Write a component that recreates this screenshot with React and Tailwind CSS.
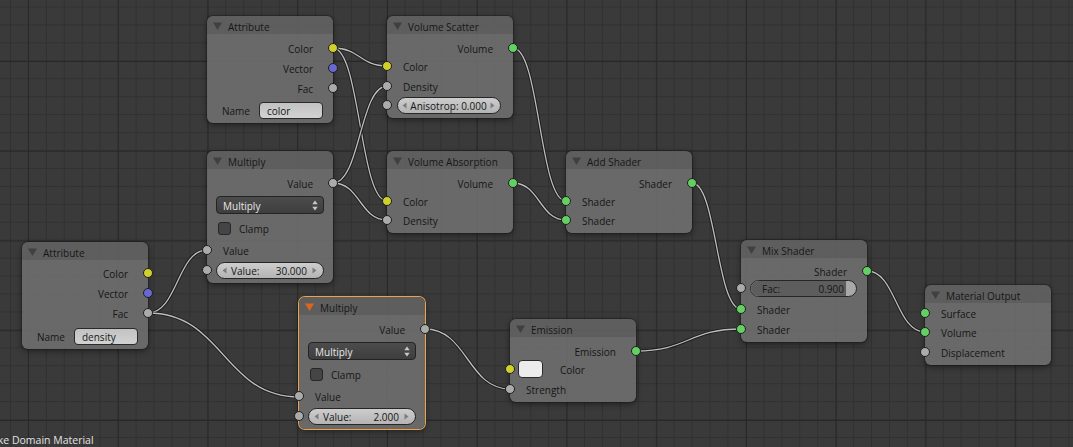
const SOCK = {
  y: "bg-[#d0d02c]",
  b: "bg-[#6868d4]",
  g: "bg-[#ababab]",
  s: "bg-[#62d062]",
};

const nodes = [
  {
    x: 207, y: 16, title: "Attribute",
    rows: [
      { k: "out", label: "Color", c: "y" },
      { k: "out", label: "Vector", c: "b" },
      { k: "out", label: "Fac", c: "g" },
      { k: "name", v: "color", mt: "mt-[2px]" },
    ],
  },
  {
    x: 387, y: 16, title: "Volume Scatter",
    rows: [
      { k: "out", label: "Volume", c: "s" },
      { k: "in", label: "Color", c: "y", mt: "-mt-[2px]" },
      { k: "in", label: "Density", c: "g" },
      { k: "aniso", text: "Anisotrop: 0.000", mt: "-mt-[1px]" },
    ],
  },
  {
    x: 207, y: 151, title: "Multiply",
    rows: [
      { k: "out", label: "Value", c: "g" },
      { k: "menu", v: "Multiply", mt: "mt-[3px]" },
      { k: "check", label: "Clamp", mt: "mt-[4px]" },
      { k: "in", label: "Value", c: "g", mt: "mt-[2px]" },
      { k: "num", label: "Value:", v: "30.000" },
    ],
  },
  {
    x: 387, y: 151, title: "Volume Absorption",
    rows: [
      { k: "out", label: "Volume", c: "s" },
      { k: "in", label: "Color", c: "y", mt: "-mt-[2px]" },
      { k: "in", label: "Density", c: "g", mt: "-mt-[1px]" },
    ],
  },
  {
    x: 566, y: 151, title: "Add Shader",
    rows: [
      { k: "out", label: "Shader", c: "s" },
      { k: "in", label: "Shader", c: "s", mt: "-mt-[2px]" },
      { k: "in", label: "Shader", c: "s", mt: "-mt-[1px]" },
    ],
  },
  {
    x: 22, y: 242, title: "Attribute",
    rows: [
      { k: "out", label: "Color", c: "y", mt: "-mt-[1px]" },
      { k: "out", label: "Vector", c: "b" },
      { k: "out", label: "Fac", c: "g" },
      { k: "name", v: "density", mt: "mt-[3px]" },
    ],
  },
  {
    x: 299, y: 297, title: "Multiply", active: true,
    rows: [
      { k: "out", label: "Value", c: "g" },
      { k: "menu", v: "Multiply", mt: "mt-[3px]" },
      { k: "check", label: "Clamp", mt: "mt-[4px]" },
      { k: "in", label: "Value", c: "g", mt: "mt-[2px]" },
      { k: "num", label: "Value:", v: "2.000" },
    ],
  },
  {
    x: 510, y: 319, title: "Emission",
    rows: [
      { k: "out", label: "Emission", c: "s" },
      { k: "color", label: "Color", c: "y", mt: "-mt-[2px]" },
      { k: "in", label: "Strength", c: "g" },
    ],
  },
  {
    x: 741, y: 240, title: "Mix Shader",
    rows: [
      { k: "out", label: "Shader", c: "s", mt: "-mt-[1px]" },
      { k: "fac", label: "Fac:", v: "0.900", pct: 90, mt: "-mt-[3px]" },
      { k: "in", label: "Shader", c: "s", mt: "mt-[1px]" },
      { k: "in", label: "Shader", c: "s" },
    ],
  },
  {
    x: 925, y: 285, title: "Material Output",
    rows: [
      { k: "in", label: "Surface", c: "s" },
      { k: "in", label: "Volume", c: "s", mt: "-mt-[1px]" },
      { k: "in", label: "Displacement", c: "g" },
    ],
  },
];

// socket centres: from -> to
const links = [
  [333, 48, 387, 66],
  [333, 48, 387, 201],
  [333, 183, 387, 86],
  [333, 183, 387, 220],
  [513, 48, 566, 201],
  [513, 183, 566, 220],
  [692, 183, 741, 309],
  [636, 351, 741, 329],
  [867, 271, 925, 332],
  [148, 313, 207, 250],
  [148, 313, 299, 397],
  [425, 329, 510, 389],
];

function wirePath([x1, y1, x2, y2]) {
  const h = Math.abs(x2 - x1) * 0.5;
  return `M${x1} ${y1} C${x1 + h} ${y1} ${x2 - h} ${y2} ${x2} ${y2}`;
}

function Socket({ c, right }) {
  return (
    <span
      className={`absolute top-1/2 -translate-y-1/2 w-[10px] h-[10px] rounded-full border border-[#1e1e1e] ${SOCK[c]} ${
        right ? "-right-[5px]" : "-left-[5px]"
      }`}
    />
  );
}

function Arrow({ dir }) {
  return (
    <svg width="5" height="7" viewBox="0 0 5 7" className="shrink-0">
      {dir === "l" ? (
        <polygon points="4.5,0.5 0.5,3.5 4.5,6.5" fill="#7c7c7c" />
      ) : (
        <polygon points="0.5,0.5 4.5,3.5 0.5,6.5" fill="#7c7c7c" />
      )}
    </svg>
  );
}

function Row({ r }) {
  const mt = r.mt || "";
  if (r.k === "out") {
    return (
      <div className={`relative h-[20px] flex items-center justify-end pr-[20px] ${mt}`}>
        <span className="pt-[2px]">{r.label}</span>
        <Socket c={r.c} right />
      </div>
    );
  }
  if (r.k === "in") {
    return (
      <div className={`relative h-[20px] flex items-center pl-[16px] ${mt}`}>
        <Socket c={r.c} />
        <span className="pt-[2px]">{r.label}</span>
      </div>
    );
  }
  if (r.k === "name") {
    return (
      <div className={`h-[20px] flex items-center pl-[15px] ${mt}`}>
        <span className="w-[37px] pt-[2px]">Name</span>
        <div className="w-[64px] h-[17px] rounded-[4px] border border-[#2a2a2a] bg-[linear-gradient(#c2c2c2,#d2d2d2)] flex items-center pl-[7px] pt-[2px]">
          {r.v}
        </div>
      </div>
    );
  }
  if (r.k === "menu") {
    return (
      <div className={`h-[18px] px-[9px] ${mt}`}>
        <div className="h-[18px] rounded-[4px] border border-[#232323] bg-[linear-gradient(#4c4c4c,#3e3e3e)] flex items-center justify-between pl-[6px] pr-[5px] text-[#e8e8e8]">
          <span className="pt-[2px]">{r.v}</span>
          <svg width="6" height="11" viewBox="0 0 6 11">
            <polygon points="3,0.5 5.7,4.3 0.3,4.3" fill="#c8c8c8" />
            <polygon points="3,10.5 5.7,6.7 0.3,6.7" fill="#c8c8c8" />
          </svg>
        </div>
      </div>
    );
  }
  if (r.k === "check") {
    return (
      <div className={`h-[20px] flex items-center pl-[11px] ${mt}`}>
        <span className="w-[13px] h-[13px] rounded-[3px] border border-[#262626] bg-[#454545]" />
        <span className="ml-[8px] pt-[2px]">{r.label}</span>
      </div>
    );
  }
  if (r.k === "num") {
    return (
      <div className={`relative h-[20px] flex items-center px-[9px] ${mt}`}>
        <Socket c="g" />
        <div className="w-full h-[17px] rounded-full border border-[#262626] bg-[linear-gradient(#cdcdcd,#b4b4b4)] flex items-center pl-[5px] pr-[6px]">
          <Arrow dir="l" />
          <span className="ml-[4px] pt-[2px]">{r.label}</span>
          <span className="ml-auto mr-[5px] pt-[2px]">{r.v}</span>
          <Arrow dir="r" />
        </div>
      </div>
    );
  }
  if (r.k === "aniso") {
    return (
      <div className={`relative h-[20px] flex items-center pl-[10px] pr-[12px] ${mt}`}>
        <Socket c="g" />
        <div className="w-full h-[17px] rounded-full border border-[#262626] bg-[linear-gradient(#cdcdcd,#b4b4b4)] flex items-center justify-between pl-[4px] pr-[5px]">
          <Arrow dir="l" />
          <span className="pt-[2px]">{r.text}</span>
          <Arrow dir="r" />
        </div>
      </div>
    );
  }
  if (r.k === "fac") {
    return (
      <div className={`relative h-[20px] flex items-center pl-[9px] pr-[10px] ${mt}`}>
        <Socket c="g" />
        <div className="relative w-full h-[17px] rounded-full border border-[#262626] bg-[#a9a9a9] overflow-hidden flex items-center pl-[11px] pr-[12px]">
          <div className="absolute inset-y-0 left-0 bg-[#5d5d5d]" style={{ width: `${r.pct}%` }} />
          <span className="relative pt-[2px]">{r.label}</span>
          <span className="relative ml-auto pt-[2px]">{r.v}</span>
        </div>
      </div>
    );
  }
  if (r.k === "color") {
    return (
      <div className={`relative h-[20px] flex items-center pl-[8px] ${mt}`}>
        <Socket c={r.c} />
        <span className="w-[25px] h-[18px] rounded-[4px] border border-[#2a2a2a] bg-[#ececec]" />
        <span className="ml-[17px] pt-[2px]">{r.label}</span>
      </div>
    );
  }
  return null;
}

function Node({ n }) {
  const hasOut = n.rows.some((r) => r.k === "out");
  return (
    <div
      className={`absolute w-[126px] rounded-[6px] bg-[rgba(112,112,112,0.88)] ${
        n.active
          ? "shadow-[0_0_0_1px_#eda24a,0_2px_6px_rgba(0,0,0,0.45)]"
          : "shadow-[0_0_0_1px_rgba(20,20,20,0.35),0_2px_6px_rgba(0,0,0,0.45)]"
      }`}
      style={{ left: n.x, top: n.y }}
    >
      <div className="h-[18px] rounded-t-[6px] bg-[rgba(0,0,0,0.1)] flex items-center pl-[6px]">
        <svg width="9" height="8" viewBox="0 0 9 8" className="mt-[1px]">
          <polygon points="0,0.5 9,0.5 4.5,8" fill={n.active ? "#d9681c" : "#404040"} />
        </svg>
        <span className="ml-[6px] pt-[3px]">{n.title}</span>
      </div>
      <div className={`${hasOut ? "pt-[4px]" : ""} pb-[3px]`}>
        {n.rows.map((r, i) => (
          <Row key={i} r={r} />
        ))}
      </div>
    </div>
  );
}

export default function App() {
  return (
    <div className="relative w-[1073px] h-[447px] overflow-hidden font-['Open_Sans','DejaVu_Sans',sans-serif] text-[10px] leading-none text-[#161616] bg-[#3a3a3a] bg-[linear-gradient(to_right,#282828_1px,transparent_1px),linear-gradient(to_bottom,#282828_1px,transparent_1px),linear-gradient(to_right,#313131_1px,transparent_1px),linear-gradient(to_bottom,#313131_1px,transparent_1px)] bg-[size:89.75px_89.75px,89.75px_89.75px,17.95px_17.95px,17.95px_17.95px] bg-[position:28px_61px,28px_61px,10px_6.5px,10px_6.5px]">
      <svg className="absolute inset-0" width="1073" height="447">
        {links.map((l, i) => (
          <g key={i} fill="none">
            <path d={wirePath(l)} stroke="#1c1c1c" strokeWidth="3.2" />
            <path d={wirePath(l)} stroke="#bdbdbd" strokeWidth="1.3" />
          </g>
        ))}
      </svg>
      {nodes.map((n, i) => (
        <Node key={i} n={n} />
      ))}
      <div className="absolute left-[-24px] top-[433px] text-[10.5px] leading-[14px] text-[#e2e2e2] whitespace-nowrap">
        Smoke Domain Material
      </div>
    </div>
  );
}
